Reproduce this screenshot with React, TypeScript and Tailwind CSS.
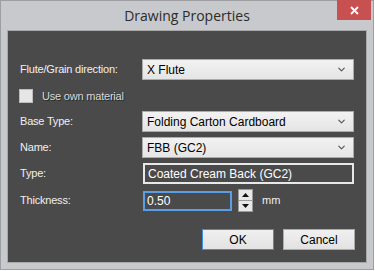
import { ChevronDown } from "lucide-react";

function Select({ value }: { value: string }) {
  return (
    <div className="shrink-0 w-[212px] h-[21px] border border-[#acacac] bg-gradient-to-b from-[#f2f2f2] to-[#e5e5e5] flex items-center justify-between pl-[4px] pr-[6px] text-[12px] text-black">
      <span>{value}</span>
      <ChevronDown size={11} strokeWidth={2.5} className="text-[#555]" />
    </div>
  );
}

function Row({ label, children, mt }: { label: string; children: React.ReactNode; mt: string }) {
  return (
    <div className={`flex items-center ${mt}`}>
      <div className="shrink-0 w-[134px] pl-[12px] whitespace-nowrap text-[11px] tracking-[-0.2px] text-[#f0f0f0]">{label}</div>
      {children}
    </div>
  );
}

export default function App() {
  return (
    <div className="w-[375px] h-[271px] bg-white" style={{ fontFamily: '"Liberation Sans", Arial, sans-serif' }}>
      <div className="w-[374px] h-[270px] bg-[#c8c9cc] border border-[#9c9ea2] flex flex-col">
        <div className="shrink-0 h-[29px] relative flex items-center justify-center">
          <span className="text-[14px] text-[#2b2b2b] -mt-[1px]" style={{ fontFamily: '"Open Sans", "Noto Sans", sans-serif' }}>
            Drawing Properties
          </span>
          <div className="absolute right-[2px] -top-[1px] w-[34px] h-[20px] bg-[#c75050] flex items-center justify-center">
            <svg width="9" height="9" viewBox="0 0 9 9">
              <path d="M1 1 L8 8 M8 1 L1 8" stroke="white" strokeWidth="1.8" />
            </svg>
          </div>
        </div>
        <div className="shrink-0 ml-[6px] w-[360px] h-[233px] border border-[#a9a9a9] bg-[#4a4a4a] flex flex-col">
          <Row label="Flute/Grain direction:" mt="mt-[28px]">
            <Select value="X Flute" />
          </Row>
          <div className="flex items-center h-[14px] mt-[9px] pl-[11px]">
            <div className="w-[14px] h-[14px] bg-[#e6e6e6] border border-[#bdbdbd]" />
            <span className="ml-[9px] text-[11px] tracking-[-0.2px] text-[#d8d8d8] [text-shadow:1px_1px_0_#2a2a2a]">Use own material</span>
          </div>
          <Row label="Base Type:" mt="mt-[8px]">
            <Select value="Folding Carton Cardboard" />
          </Row>
          <Row label="Name:" mt="mt-[5px]">
            <Select value="FBB (GC2)" />
          </Row>
          <Row label="Type:" mt="mt-[5px]">
            <div className="shrink-0 w-[211px] h-[21px] ml-[1px] border-[2px] border-[#e8e8e8] bg-[#4a4a4a] flex items-center pl-[3px] text-[12px] text-white">
              Coated Cream Back (GC2)
            </div>
          </Row>
          <Row label="Thickness:" mt="mt-[5px]">
            <div className="shrink-0 w-[89px] h-[20px] ml-[1px] border-[2px] border-[#5a9ee6] bg-[#4a4a4a] flex items-center pl-[2px] text-[12px] text-white">
              0.50
            </div>
            <div className="shrink-0 ml-[6px] w-[15px] h-[23px] flex flex-col border border-[#9a9a9a] bg-[#e8e8e8]">
              <div className="flex-1 flex items-center justify-center border-b border-[#9a9a9a]">
                <svg width="7" height="4" viewBox="0 0 7 4"><path d="M0 4 L3.5 0 L7 4Z" fill="#111" /></svg>
              </div>
              <div className="flex-1 flex items-center justify-center">
                <svg width="7" height="4" viewBox="0 0 7 4"><path d="M0 0 L3.5 4 L7 0Z" fill="#111" /></svg>
              </div>
            </div>
            <span className="ml-[9px] text-[11px] text-[#f0f0f0]">mm</span>
          </Row>
          <div className="flex justify-end gap-[9px] mt-[17px] pr-[11px]">
            <div className="w-[72px] h-[21px] border border-[#3c8fe0] bg-gradient-to-b from-[#f0f0f0] to-[#e2e2e2] flex items-center justify-center text-[12px] text-black">
              OK
            </div>
            <div className="w-[72px] h-[21px] border border-[#acacac] bg-gradient-to-b from-[#f0f0f0] to-[#e2e2e2] flex items-center justify-center text-[12px] text-black">
              Cancel
            </div>
          </div>
        </div>
      </div>
    </div>
  );
}
